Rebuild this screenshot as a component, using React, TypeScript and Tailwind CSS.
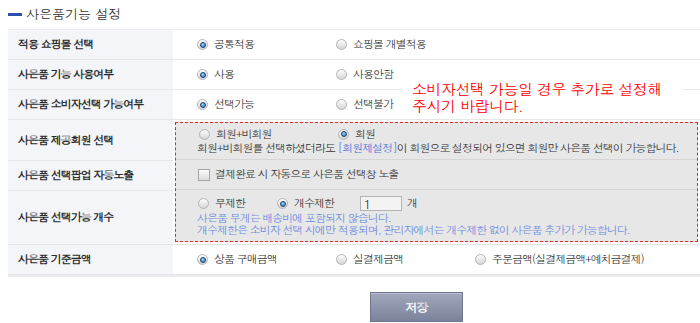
import React from 'react'

const font = "font-['Dotum','Noto_Sans_CJK_KR',sans-serif]"

function Radio({ checked }: { checked?: boolean }) {
  return (
    <span className="relative inline-flex h-[11px] w-[11px] shrink-0 items-center justify-center rounded-full border border-[#b4b4b4] bg-[linear-gradient(#fdfdfd,#d6d6d6)]">
      {checked && (
        <span className="h-[6px] w-[6px] rounded-full border border-[#1b3f66] bg-[radial-gradient(circle_at_40%_35%,#9fd3ff,#1e6fc0)]" />
      )}
    </span>
  )
}

function Option({ label, checked, w = 'w-[139px]' }: { label: string; checked?: boolean; w?: string }) {
  return (
    <label className={`flex items-center gap-[6px] ${w}`}>
      <Radio checked={checked} />
      <span>{label}</span>
    </label>
  )
}

function Row({ label, children }: { label: string; children: React.ReactNode }) {
  return (
    <div className="grid h-[30px] grid-cols-[165px_1fr] border-b border-[#e6e6e6]">
      <div className="flex items-center bg-[#f4f5f9] pl-[10px] font-bold text-[#2b2b2b]">{label}</div>
      <div className="flex items-center pl-[24px]">{children}</div>
    </div>
  )
}

export default function App() {
  return (
    <div className={`relative h-[323px] w-[700px] overflow-hidden bg-white text-[11px] tracking-[-1px] text-[#333] ${font}`}>
      {/* Title */}
      <div className="flex h-[29px] items-center gap-[4px] pl-[8px] pb-[1px]">
        <span className="h-[3px] w-[14px] bg-[#2c4fb0]" />
        <span className="text-[13px] tracking-[0px] text-[#333]">사은품기능 설정</span>
      </div>

      {/* Table */}
      <div className="ml-[8px] w-[692px] border-t border-[#ececec]">
        <Row label="적용 쇼핑몰 선택">
          <Option label="공통적용" checked />
          <Option label="쇼핑몰 개별적용" />
        </Row>
        <Row label="사은품 기능 사용여부">
          <Option label="사용" checked />
          <Option label="사용안함" />
        </Row>
        <Row label="사은품 소비자선택 가능여부">
          <Option label="선택가능" checked />
          <Option label="선택불가" />
        </Row>

        <div className="grid grid-cols-[165px_1fr] border-b border-[#e6e6e6]">
          <div className="flex flex-col bg-[#f4f5f9] font-bold text-[#2b2b2b]">
            <div className="flex h-[41px] items-center border-b border-[#e6e6e6] pl-[10px]">사은품 제공회원 선택</div>
            <div className="flex h-[30px] items-center border-b border-[#e6e6e6] pl-[10px]">사은품 선택팝업 자동노출</div>
            <div className="flex flex-1 items-center pl-[10px]">사은품 선택가능 개수</div>
          </div>
          <div className="pb-[2px] pl-[2px] pr-[2px] pt-[2px]">
            <div className="border border-dashed border-[#e8262b] bg-[#e7e7e7]">
              <div className="flex h-[37px] flex-col justify-center border-b border-[#d6d6d6] pl-[21px]">
                <div className="flex h-[14px] items-center pl-[2px]">
                  <Option label="회원+비회원" />
                  <Option label="회원" checked />
                </div>
                <div className="whitespace-nowrap leading-[14px]">
                  회원+비회원를 선택하셨더라도 <span className="text-[#4a6fd6]">[회원제설정]</span>이 회원으로 설정되어 있으면 회원만 사은품 선택이 가능합니다.
                </div>
              </div>
              <div className="flex h-[30px] items-center gap-[5px] border-b border-[#d6d6d6] pl-[22px]">
                <span className="h-[12px] w-[12px] border border-[#a6a6a6] bg-[linear-gradient(#fafafa,#dcdcdc)]" />
                <span>결제완료 시 자동으로 사은품 선택창 노출</span>
              </div>
              <div className="flex h-[51px] flex-col justify-center pl-[21px]">
                <div className="flex h-[16px] items-center pl-[1px]">
                  <Option label="무제한" w="w-[79px]" />
                  <label className="flex items-center gap-[6px]">
                    <Radio checked />
                    <span>개수제한</span>
                  </label>
                  <input
                    readOnly
                    value="1"
                    className="ml-[26px] h-[15px] w-[42px] border border-[#b3b3b3] bg-[#f3f3f3] px-[3px] text-[12px] leading-[13px] text-[#222] outline-none"
                  />
                  <span className="ml-[5px]">개</span>
                </div>
                <div className="whitespace-nowrap leading-[12px] text-[#6a89de]">
                  <div>사은품 무게는 배송비에 포함되지 않습니다.</div>
                  <div>개수제한은 소비자 선택 시에만 적용되며, 관리자에서는 개수제한 없이 사은품 추가가 가능합니다.</div>
                </div>
              </div>
            </div>
          </div>
        </div>

        <div className="border-b-[2px] border-[#ebebeb]">
          <Row label="사은품 기준금액">
            <Option label="상품 구매금액" checked />
            <Option label="실결제금액" />
            <Option label="주문금액(실결제금액+예치금결제)" w="w-auto" />
          </Row>
        </div>
      </div>

      {/* Save button */}
      <button className="ml-[370px] mt-[15px] h-[30px] w-[93px] border border-[#6e758c] bg-[linear-gradient(#a1a7bc,#7b829b)] text-[12px] font-bold text-white shadow-[inset_0_1px_0_#b8bdd0]">
        저장
      </button>

      {/* Annotation */}
      <div className="absolute left-[402px] top-[80px] w-[281px] whitespace-nowrap bg-white px-[10px] text-[15px] font-medium leading-[17px] tracking-[-0.5px] text-[#ff0000]">
        <div>소비자선택 가능일 경우 추가로 설정해</div>
        <div>주시기 바랍니다.</div>
      </div>
    </div>
  )
}
